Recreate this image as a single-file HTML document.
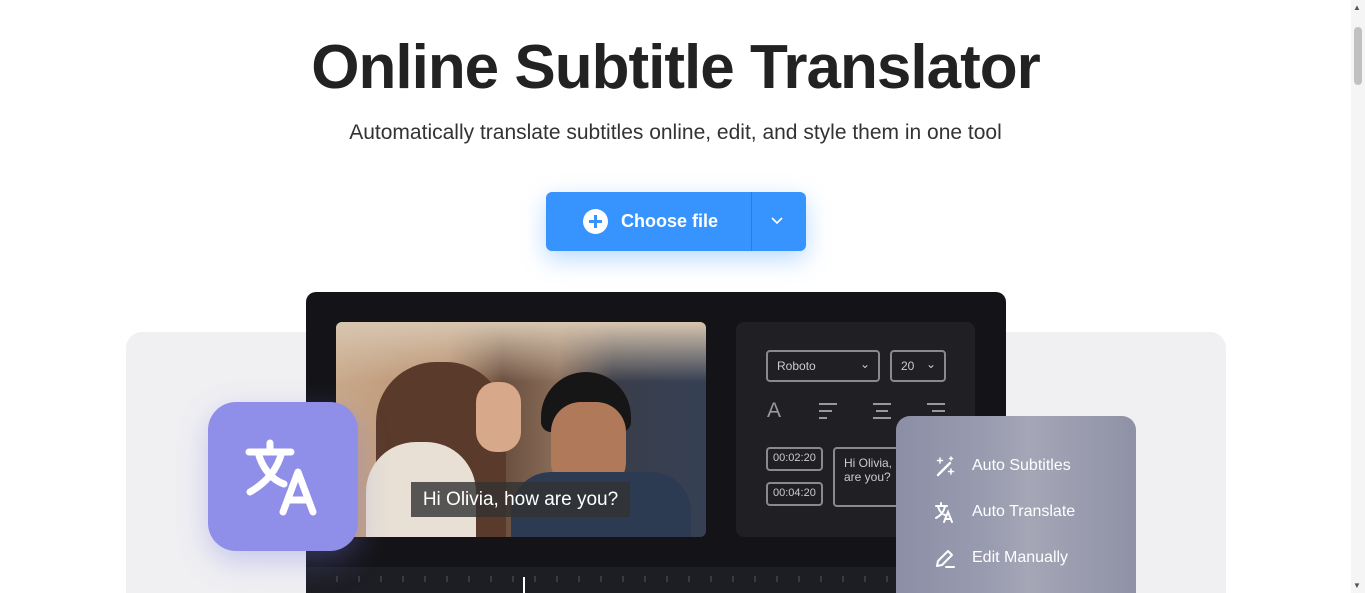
<!DOCTYPE html>
<html style="overflow:hidden;height:593px"><head><meta charset="utf-8"><style>
*{margin:0;padding:0;box-sizing:border-box}
body{width:1365px;height:593px;overflow:hidden;background:#fff;font-family:"Liberation Sans",sans-serif;position:relative}
.abs{position:absolute}
h1{position:absolute;top:32px;left:0;width:1351px;text-align:center;font-size:62px;font-weight:700;color:#222;letter-spacing:-1px}
.sub{top:121px;left:0;width:1351px;text-align:center;font-size:21px;color:#333}
.btn{left:546px;top:192px;width:260px;height:59px;background:#3794ff;border-radius:6px;box-shadow:0 8px 24px rgba(55,148,255,.35);color:#fff}
.ctl{color:#ccc;border:2px solid #8a8a8e;border-radius:4px;font-size:12px;position:absolute;white-space:nowrap;overflow:hidden}
.menu{left:896px;top:416px;width:240px;height:200px;border-radius:14px;background:linear-gradient(90deg,#8c8ea6 0%,#9a9cb0 40%,#a5a6b6 55%,#8f91a6 100%)}
.mi{position:absolute;left:38px;color:#fff;font-size:16px;display:flex;align-items:center;gap:16px}
</style></head><body>
<h1>Online Subtitle Translator</h1>
<div class="abs sub">Automatically translate subtitles online, edit, and style them in one tool</div>
<div class="abs btn">
 <div class="abs" style="left:37px;top:17px;width:25px;height:25px;border-radius:50%;background:#fff"></div>
 <div class="abs" style="left:43px;top:28px;width:13px;height:3px;background:#3794ff"></div>
 <div class="abs" style="left:48px;top:23px;width:3px;height:13px;background:#3794ff"></div>
 <div class="abs" style="left:75px;top:19px;font-size:18px;font-weight:700">Choose file</div>
 <div class="abs" style="left:205px;top:0;width:1px;height:59px;background:rgba(0,0,0,.15)"></div>
 <svg class="abs" style="left:224px;top:24px" width="14" height="10"><path d="M2 2l5 5 5-5" stroke="#fff" stroke-width="1.6" fill="none"/></svg>
</div>
<div class="abs" style="left:126px;top:332px;width:1100px;height:300px;background:#f0f0f3;border-radius:16px"></div>
<div class="abs" style="left:306px;top:292px;width:700px;height:320px;background:#141418;border-radius:10px"></div>
<div class="abs" style="left:306px;top:567px;width:700px;height:30px;background:#1d1e24"></div>
<div class="abs" style="left:336px;top:322px;width:370px;height:215px;border-radius:6px;overflow:hidden;background:linear-gradient(90deg,#c9a98a 0%,#b89070 30%,#6a4e3e 45%,#8a6e5a 60%,#3a3e4a 75%,#364054 100%)">
 <div class="abs" style="left:0;top:0;width:370px;height:60px;background:linear-gradient(180deg,#d8c6b0,rgba(216,198,176,0))"></div>
 <div class="abs" style="left:40px;top:40px;width:130px;height:200px;border-radius:60px 60px 0 0;background:#5a3a2a"></div>
 <div class="abs" style="left:30px;top:120px;width:110px;height:120px;border-radius:50px 50px 0 0;background:#e8e0d4"></div>
 <div class="abs" style="left:140px;top:60px;width:45px;height:70px;border-radius:20px;background:#d8a88a"></div>
 <div class="abs" style="left:205px;top:50px;width:90px;height:60px;border-radius:45px 45px 10px 10px;background:#161616"></div>
 <div class="abs" style="left:215px;top:80px;width:75px;height:90px;border-radius:30px;background:#b07a5a"></div>
 <div class="abs" style="left:175px;top:150px;width:180px;height:80px;border-radius:40px 40px 0 0;background:#2c3a52"></div>
 <div class="abs" style="left:75px;top:160px;width:219px;height:35px;background:rgba(50,50,50,.8);color:#fff;font-size:19px;text-align:center;line-height:35px">Hi Olivia, how are you?</div>
</div>
<div class="abs" style="left:736px;top:322px;width:239px;height:215px;background:#1f1f24;border-radius:8px"></div>
<div class="ctl" style="left:766px;top:350px;width:114px;height:32px;padding:7px 9px">Roboto<span style="position:absolute;right:8px;top:5px">⌄</span></div>
<div class="ctl" style="left:890px;top:350px;width:56px;height:32px;padding:7px 9px">20<span style="position:absolute;right:8px;top:5px">⌄</span></div>
<div class="abs" style="left:767px;top:399px;color:#999;font-size:21px">A</div>
<svg class="abs" style="left:819px;top:402px" width="130" height="18" stroke="#999" stroke-width="2"><path d="M0 2h18M0 9h13M0 16h8M54 2h18M57 9h12M54 16h18M108 2h18M113 9h13M118 16h8"/></svg>
<div class="ctl" style="left:766px;top:447px;width:57px;height:24px;padding:3px 5px;font-size:11px">00:02:20</div>
<div class="ctl" style="left:766px;top:482px;width:57px;height:24px;padding:3px 5px;font-size:11px">00:04:20</div>
<div class="ctl" style="left:833px;top:447px;width:90px;height:60px;padding:7px 9px;line-height:14px">Hi Olivia, how<br>are you?</div>
<svg class="abs" style="left:336px;top:576px" width="560" height="14"><g stroke="#555" stroke-width="1"><path d="M1 0v6M23 0v6M45 0v6M67 0v6M89 0v6M111 0v6M133 0v6M155 0v6M177 0v6M199 0v6M221 0v6M243 0v6M265 0v6M287 0v6M309 0v6M331 0v6M353 0v6M375 0v6M397 0v6M419 0v6M441 0v6M463 0v6M485 0v6M507 0v6M529 0v6M551 0v6"/></g></svg>
<div class="abs" style="left:523px;top:577px;width:2px;height:20px;background:#fff"></div>
<div class="abs" style="left:208px;top:402px;width:150px;height:149px;border-radius:28px;background:#8f8ee9;box-shadow:0 10px 30px rgba(120,120,220,.35)">
 <svg class="abs" style="left:35px;top:35px" width="80" height="80" fill="none" stroke="#fff" stroke-width="7" stroke-linecap="round" stroke-linejoin="round"><path d="M6 15h42M27 6v9M15 15c4 16 14 28 26 32M39 15c-5 18-15 30-32 40"/><path d="M40 75l15-40 15 40M45 63h20"/></svg>
</div>
<div class="abs menu">
 <div class="mi" style="top:39px"><svg width="22" height="22" fill="none" stroke="#fff" stroke-width="2.4" stroke-linecap="round"><path d="M4 20L16 8"/><path d="M6 3v5M3.5 5.5h5M17 14v5M14.5 16.5h5M17 2v3M15.5 3.5h3" stroke-width="1.5"/></svg>Auto Subtitles</div>
 <div class="mi" style="top:85px"><svg width="22" height="22" fill="none" stroke="#fff" stroke-width="2" stroke-linecap="round"><path d="M2 5h11M7 2v3M4 5c1 5 4 8 7 9M11 5c-1 6-4 9-9 12M10 21l4-10 4 10M11 18h6"/></svg>Auto Translate</div>
 <div class="mi" style="top:131px"><svg width="22" height="22" fill="none" stroke="#fff" stroke-width="2" stroke-linecap="round" stroke-linejoin="round"><path d="M3 19l1-5L14 4l4 4L8 18zM12 20h8"/></svg>Edit Manually</div>
</div>
<div class="abs" style="left:1351px;top:0;width:14px;height:593px;background:#f5f5f5"></div>
<div class="abs" style="left:1354px;top:27px;width:8px;height:58px;background:#c1c1c1;border-radius:4px"></div>
<div class="abs" style="left:1353px;top:3px;font-size:8px;color:#555">▲</div>
<div class="abs" style="left:1353px;top:581px;font-size:8px;color:#555">▼</div>
</body></html>
